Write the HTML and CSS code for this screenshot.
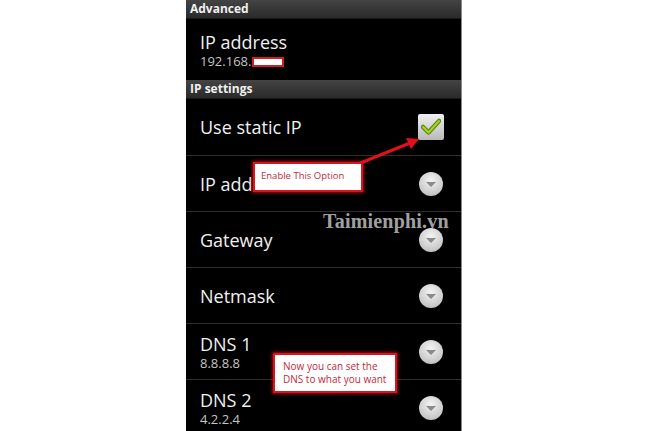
FILE: index.html
```html
<!DOCTYPE html>
<html lang="en">
<head>
    <meta charset="UTF-8">
    <title>Advanced Wi-Fi settings</title>
    <link rel="stylesheet" href="styles.css">
</head>
<body>
    <div class="screen">
        <div class="group-header">Advanced</div>

        <div class="pref pref-info">
            <div class="pref-text">
                <div class="pref-title">IP address</div>
                <div class="pref-summary">192.168.<span class="masked"></span></div>
            </div>
        </div>

        <div class="group-header">IP settings</div>

        <div class="pref pref-first">
            <div class="pref-text">
                <div class="pref-title">Use static IP</div>
            </div>
            <span class="checkbox">
                <svg width="20" height="18" viewBox="0 0 20 18">
                    <path d="M2 9 L7.5 14.5 L18 3" fill="none" stroke="#5f8a12" stroke-width="4.5" stroke-linecap="round" stroke-linejoin="round"/>
                    <path d="M2 9 L7.5 14.5 L18 3" fill="none" stroke="#a6d22a" stroke-width="2" stroke-linecap="round" stroke-linejoin="round"/>
                </svg>
            </span>
        </div>

        <div class="pref">
            <div class="pref-text">
                <div class="pref-title">IP address</div>
            </div>
            <span class="dropdown"></span>
        </div>

        <div class="pref">
            <div class="pref-text">
                <div class="pref-title">Gateway</div>
            </div>
            <span class="dropdown"></span>
        </div>

        <div class="pref">
            <div class="pref-text">
                <div class="pref-title">Netmask</div>
            </div>
            <span class="dropdown"></span>
        </div>

        <div class="pref">
            <div class="pref-text">
                <div class="pref-title">DNS 1</div>
                <div class="pref-summary">8.8.8.8</div>
            </div>
            <span class="dropdown"></span>
        </div>

        <div class="pref">
            <div class="pref-text">
                <div class="pref-title">DNS 2</div>
                <div class="pref-summary">4.2.2.4</div>
            </div>
            <span class="dropdown"></span>
        </div>

        <!-- annotations drawn over the list -->
        <div class="watermark">Taimienphi.vn</div>

        <svg class="arrow" width="80" height="40" viewBox="0 0 80 40">
            <line x1="4" y1="34" x2="56" y2="13" stroke="#e0101c" stroke-width="3" stroke-linecap="round"/>
            <polygon points="65,9 52,8 57,19" fill="#e0101c"/>
        </svg>

        <div class="callout callout-static">Enable This Option</div>
        <div class="callout callout-dns">Now you can set the<br>DNS to what you want</div>
    </div>
</body>
</html>
```

FILE: styles.css
```css
body {
    margin: 0;
    background-color: #fff;
    font-family: "Open Sans", "Noto Sans", sans-serif;
}
.screen {
    position: relative;
    width: 275px;
    height: 431px;
    margin-left: 186px;
    background-color: #000;
    border-right: 1px solid #8a8a8a;
    overflow: hidden;
    color: #f2f2f2;
}
.group-header {
    height: 18px;
    line-height: 18px;
    padding-left: 4px;
    font-size: 12px;
    font-weight: bold;
    color: #f0f0f0;
    background: linear-gradient(#444, #2a2a2a);
    border-bottom: 1px solid #1a1a1a;
}
.pref {
    display: flex;
    align-items: center;
    height: 55px;
    padding: 0 17px 0 14px;
    border-bottom: 1px solid #2e2e2e;
}
.pref-info {
    height: 61px;
    border-bottom: none;
}
.pref-first {
    height: 56px;
}
.pref-text {
    flex: 1;
}
.pref-title {
    font-size: 18px;
    line-height: 22px;
    color: #f0f0f0;
}
.pref-summary {
    font-size: 13px;
    line-height: 16px;
    color: #c4c4c4;
}
.masked {
    display: inline-block;
    width: 28px;
    height: 6px;
    margin-left: 1px;
    background-color: #fff;
    border: 2px solid #d41a24;
    vertical-align: -1px;
}
.checkbox {
    display: flex;
    align-items: center;
    justify-content: center;
    width: 26px;
    height: 26px;
    border-radius: 2px;
    background: linear-gradient(#f0f0f0, #b9b9b9);
}
.dropdown {
    position: relative;
    width: 24px;
    height: 24px;
    margin-right: 1px;
    border-radius: 50%;
    background: radial-gradient(circle at 50% 35%, #f4f4f4, #c8c8c8 70%, #a8a8a8);
}
.dropdown::after {
    content: "";
    position: absolute;
    left: 7px;
    top: 10px;
    border-left: 5px solid transparent;
    border-right: 5px solid transparent;
    border-top: 5px solid #8a8a8a;
}
.watermark {
    position: absolute;
    left: 137px;
    top: 210px;
    font-family: "Liberation Serif", serif;
    font-size: 20px;
    font-weight: bold;
    letter-spacing: 0.2px;
    color: rgba(205, 205, 205, 0.8);
}
.arrow {
    position: absolute;
    top: 130px;
    left: 168px;
}
.callout {
    position: absolute;
    background-color: #fff;
    border: 2px solid #d8141e;
    box-shadow: 0 0 3px 1px rgba(230, 20, 30, 0.7);
    color: #c4283a;
    font-size: 9.5px;
    line-height: 13px;
}
.callout-static {
    left: 67px;
    top: 162px;
    width: 100px;
    height: 26px;
    line-height: 24px;
    padding-left: 6px;
}
.callout-dns {
    left: 87px;
    top: 353px;
    width: 112px;
    height: 31px;
    padding: 5px 0 0 8px;
    font-size: 10px;
}
```
